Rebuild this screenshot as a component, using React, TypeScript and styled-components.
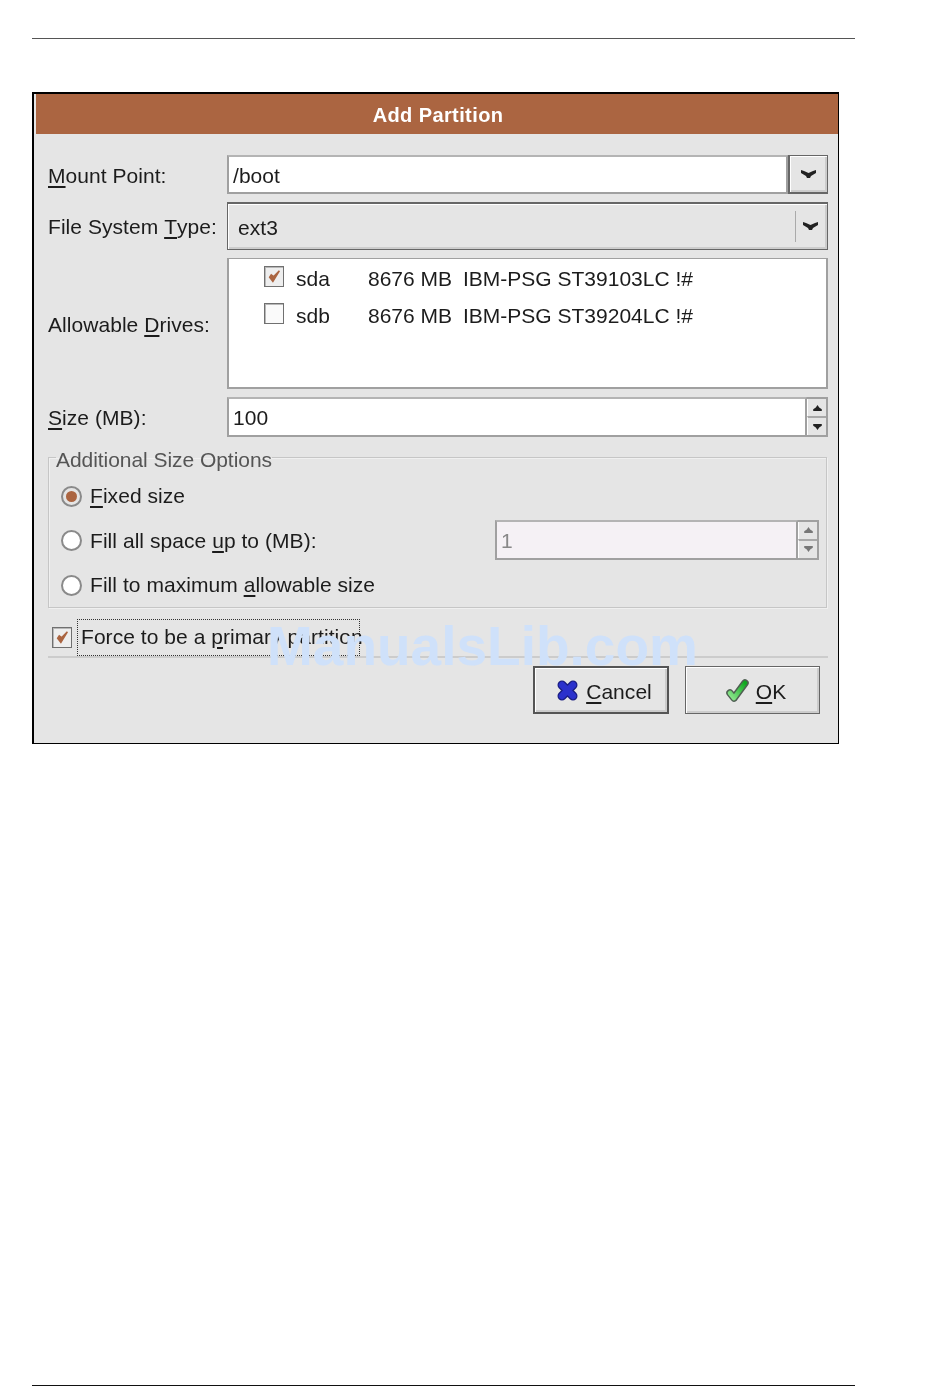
import styled, { createGlobalStyle } from "styled-components";

const GlobalStyle = createGlobalStyle`
  html, body {
    margin: 0;
    padding: 0;
    background: #ffffff;
  }
  * {
    box-sizing: border-box;
  }
`;

const Page = styled.div`
  position: relative;
  width: 950px;
  height: 1398px;
  padding: 38px 95px 12px 32px;
  display: flex;
  flex-direction: column;
  font-family: "Liberation Sans", Arial, sans-serif;
  font-size: 21px;
  letter-spacing: 0.05px;
  color: #1c1c1c;
`;

const TopRule = styled.div`
  height: 1px;
  background: #555555;
  flex: none;
`;

const BottomRule = styled.div`
  height: 1px;
  background: #111111;
  flex: none;
  margin-top: auto;
`;

const Dialog = styled.div`
  position: relative;
  width: 807px;
  margin-top: 53px;
  background: #e5e5e5;
  border-style: solid;
  border-color: #000000;
  border-width: 2px 1px 1px 2px;
  padding-left: 2px;
  filter: blur(0.4px);
`;

const TitleBar = styled.div`
  height: 40px;
  background: #ab6541;
  color: #ffffff;
  font-weight: 700;
  font-size: 20px;
  letter-spacing: 0.4px;
  display: flex;
  align-items: center;
  justify-content: center;
  padding: 2px 0 0 2px;
`;

const Body = styled.div`
  padding: 21px 10px 29px 12px;
`;

const Form = styled.div`
  display: grid;
  grid-template-columns: 179px 601px;
  grid-template-rows: 39px 48px 131px 40px;
  row-gap: 8px;
`;

const Label = styled.div`
  display: flex;
  align-items: center;
  padding-top: 2px;
  white-space: pre;
`;

const Mn = styled.span`
  text-decoration: underline;
  text-decoration-thickness: 2px;
  text-underline-offset: 3px;
`;

const Combo = styled.div`
  display: flex;
`;

const Entry = styled.div<{ $disabled?: boolean }>`
  flex: 1;
  display: flex;
  align-items: center;
  padding: 2px 0 0 4px;
  background: ${(p) => (p.$disabled ? "#f5f1f5" : "#ffffff")};
  color: ${(p) => (p.$disabled ? "#888888" : "inherit")};
  border: 2px solid #a0a0a0;
  border-top-color: #b4b4b4;
`;

const ArrowButton = styled.div`
  width: 40px;
  display: flex;
  align-items: center;
  justify-content: center;
  background: #e5e5e5;
  border: 1px solid #666666;
  border-left-width: 2px;
  border-bottom-width: 2px;
  box-shadow: inset 1px 1px 0 #ffffff, inset -2px -2px 0 #cccccc;
`;

const OptionMenu = styled.div`
  display: flex;
  align-items: center;
  padding-left: 10px;
  background: #e5e5e5;
  border: 1px solid #666666;
  border-top-width: 2px;
  box-shadow: inset 1px 1px 0 #ffffff, inset -2px -2px 0 #cccccc;
`;

const OptionValue = styled.span`
  flex: 1;
  padding-top: 3px;
`;

const OptionArrow = styled.div`
  width: 32px;
  height: 31px;
  padding-right: 2px;
  display: flex;
  align-items: center;
  justify-content: center;
  border-left: 1px solid #aaaaaa;
`;

const DriveList = styled.div`
  background: #ffffff;
  border: 2px solid #a0a0a0;
  border-top-width: 1px;
  padding: 1px 0 0 35px;
`;

const DriveRow = styled.div`
  display: grid;
  grid-template-columns: 32px 72px 95px 1fr;
  align-items: center;
  height: 37px;
  letter-spacing: 0;
  white-space: nowrap;
`;

const Check = styled.span<{ $on?: boolean }>`
  width: 20px;
  height: 21px;
  display: flex;
  align-items: center;
  justify-content: center;
  background: ${(p) => (p.$on ? "#eeeeee" : "#fafafa")};
  border: 1px solid #707070;
  box-shadow: inset 1px 1px 0 #b8b8b8;
`;

const DriveCheck = styled(Check)`
  margin-bottom: 5px;
`;

const Spinner = styled.div<{ $width?: number; $height: number }>`
  display: flex;
  width: ${(p) => (p.$width ? `${p.$width}px` : "auto")};
  height: ${(p) => p.$height}px;
`;

const Stepper = styled.div`
  width: 21px;
  flex: none;
  display: flex;
  flex-direction: column;
  border: 2px solid #a0a0a0;
  border-left: none;
`;

const StepButton = styled.div`
  flex: 1;
  display: flex;
  align-items: center;
  justify-content: center;
  background: #e5e5e5;
  border-left: 1px solid #ffffff;
  & + & {
    border-top: 2px solid #a8a8a8;
  }
`;

const SizeFrame = styled.fieldset`
  width: 779px;
  height: 166px;
  margin: 5px 0 0;
  padding: 2px 7px 0 12px;
  border: 1px solid #c6c6c6;
  box-shadow: inset 1px 1px 0 #f0f0f0, 1px 1px 0 #f0f0f0;
`;

const FrameLegend = styled.legend`
  margin-left: -5px;
  padding: 6px 0 0;
  color: #555555;
  letter-spacing: -0.05px;
  line-height: 24px;
`;

const RadioRow = styled.div`
  display: flex;
  align-items: center;
  height: 44.5px;
  gap: 8px;
  white-space: pre;
`;

const Radio = styled.span<{ $on?: boolean }>`
  width: 21px;
  height: 21px;
  flex: none;
  border-radius: 50%;
  display: flex;
  align-items: center;
  justify-content: center;
  background: ${(p) => (p.$on ? "#e5e5e5" : "#ffffff")};
  border: 2px solid #8a8a8a;
  &::after {
    content: "";
    display: ${(p) => (p.$on ? "block" : "none")};
    width: 11px;
    height: 11px;
    border-radius: 50%;
    background: #ab6541;
  }
`;

const SpinSlot = styled.div`
  margin-left: auto;
  margin-bottom: 2px;
`;

const ForceRow = styled.div`
  display: flex;
  align-items: center;
  gap: 5px;
  margin-top: 11px;
  padding-left: 4px;
  white-space: pre;
`;

const FocusBox = styled.div`
  width: 283px;
  height: 37px;
  display: flex;
  align-items: center;
  padding: 0 0 2px 3px;
  border: 1px dotted #333333;
`;

const Separator = styled.div`
  height: 2px;
  background: #cccccc;
  width: 780px;
`;

const ButtonRow = styled.div`
  display: flex;
  justify-content: flex-end;
  gap: 16px;
  margin-top: 8px;
  padding-right: 8px;
`;

const Button = styled.div<{ $default?: boolean }>`
  width: ${(p) => (p.$default ? "136px" : "135px")};
  height: 48px;
  display: flex;
  align-items: center;
  justify-content: center;
  gap: ${(p) => (p.$default ? "8px" : "7px")};
  padding-left: 7px;
  background: #e5e5e5;
  border: ${(p) => (p.$default ? "2px solid #555555" : "1px solid #666666")};
  box-shadow: inset 1px 1px 0 #ffffff, inset -2px -2px 0 #cccccc;
`;

const ButtonText = styled.span`
  padding-top: 3px;
`;

const Watermark = styled.div`
  position: absolute;
  left: 267px;
  top: 615px;
  font-family: "Liberation Sans", Arial, sans-serif;
  font-weight: 700;
  font-size: 55px;
  line-height: 62px;
  letter-spacing: 0;
  color: #cfe1fa;
  white-space: nowrap;
`;

const ChevronDown = () => (
  <svg width="15" height="9" viewBox="0 0 15 9">
    <polygon points="0,0 3,1 7.5,3 12,1 15,0 15,3 10,6 9,8 6,8 5,6 0,3" fill="#222222" />
  </svg>
);

const StepArrow = ({ up, muted }: { up?: boolean; muted?: boolean }) => (
  <svg width="9" height="6" viewBox="0 0 10 7">
    <polygon
      points={up ? "5,0 7,3 10,5 10,7 0,7 0,5 3,3" : "0,0 10,0 10,2 7,4 5,7 3,4 0,2"}
      fill={muted ? "#777777" : "#222222"}
    />
  </svg>
);

const Tick = () => (
  <svg width="13" height="13" viewBox="0 0 16 16">
    <path d="M2 9 L6 14 L14 1 L7 8 L4 6 Z" fill="#ab6541" stroke="#ab6541" strokeWidth="1.8" />
  </svg>
);

const CancelIcon = () => (
  <svg width="21" height="21" viewBox="0 0 21 21">
    <path d="M5 5 L16 16 M16 5 L5 16" stroke="#1a1d80" strokeWidth="9" strokeLinecap="round" />
    <path d="M5 5 L16 16 M16 5 L5 16" stroke="#2b31cc" strokeWidth="6.5" strokeLinecap="round" />
  </svg>
);

const OkIcon = () => (
  <svg width="23" height="25" viewBox="0 0 23 25">
    <defs>
      <linearGradient id="okGreen" x1="0" y1="1" x2="1" y2="0">
        <stop offset="0" stopColor="#8ee88e" />
        <stop offset="1" stopColor="#0fa81f" />
      </linearGradient>
    </defs>
    <path d="M4 15 L8 20 L19 5" fill="none" stroke="#4f5f52" strokeWidth="7.5" strokeLinecap="round" strokeLinejoin="round" />
    <path d="M4 15 L8 20 L19 5" fill="none" stroke="url(#okGreen)" strokeWidth="4.6" strokeLinecap="round" strokeLinejoin="round" />
  </svg>
);

const App = () => {
  return (
    <Page>
      <GlobalStyle />
      <TopRule />
      <Dialog>
        <TitleBar>Add Partition</TitleBar>
        <Body>
          <Form>
            <Label>
              <Mn>M</Mn>ount Point:
            </Label>
            <Combo>
              <Entry>/boot</Entry>
              <ArrowButton>
                <ChevronDown />
              </ArrowButton>
            </Combo>

            <Label>
              File System <Mn>T</Mn>ype:
            </Label>
            <OptionMenu>
              <OptionValue>ext3</OptionValue>
              <OptionArrow>
                <ChevronDown />
              </OptionArrow>
            </OptionMenu>

            <Label>
              Allowable <Mn>D</Mn>rives:
            </Label>
            <DriveList>
              <DriveRow>
                <DriveCheck $on>
                  <Tick />
                </DriveCheck>
                <span>sda</span>
                <span>8676 MB</span>
                <span>IBM-PSG ST39103LC !#</span>
              </DriveRow>
              <DriveRow>
                <DriveCheck />
                <span>sdb</span>
                <span>8676 MB</span>
                <span>IBM-PSG ST39204LC !#</span>
              </DriveRow>
            </DriveList>

            <Label>
              <Mn>S</Mn>ize (MB):
            </Label>
            <Spinner $height={40}>
              <Entry>100</Entry>
              <Stepper>
                <StepButton>
                  <StepArrow up />
                </StepButton>
                <StepButton>
                  <StepArrow />
                </StepButton>
              </Stepper>
            </Spinner>
          </Form>

          <SizeFrame>
            <FrameLegend>Additional Size Options</FrameLegend>
            <RadioRow>
              <Radio $on />
              <span>
                <Mn>F</Mn>ixed size
              </span>
            </RadioRow>
            <RadioRow>
              <Radio />
              <span>
                Fill all space <Mn>u</Mn>p to (MB):
              </span>
              <SpinSlot>
                <Spinner $width={324} $height={40}>
                  <Entry $disabled>1</Entry>
                  <Stepper>
                    <StepButton>
                      <StepArrow up muted />
                    </StepButton>
                    <StepButton>
                      <StepArrow muted />
                    </StepButton>
                  </Stepper>
                </Spinner>
              </SpinSlot>
            </RadioRow>
            <RadioRow>
              <Radio />
              <span>
                Fill to maximum <Mn>a</Mn>llowable size
              </span>
            </RadioRow>
          </SizeFrame>

          <ForceRow>
            <Check $on>
              <Tick />
            </Check>
            <FocusBox>
              <span>
                Force to be a <Mn>p</Mn>rimary partition
              </span>
            </FocusBox>
          </ForceRow>
          <Separator />

          <ButtonRow>
            <Button $default>
              <CancelIcon />
              <ButtonText>
                <Mn>C</Mn>ancel
              </ButtonText>
            </Button>
            <Button>
              <OkIcon />
              <ButtonText>
                <Mn>O</Mn>K
              </ButtonText>
            </Button>
          </ButtonRow>
        </Body>
      </Dialog>
      <BottomRule />
      <Watermark>ManualsLib.com</Watermark>
    </Page>
  );
};

export default App;
